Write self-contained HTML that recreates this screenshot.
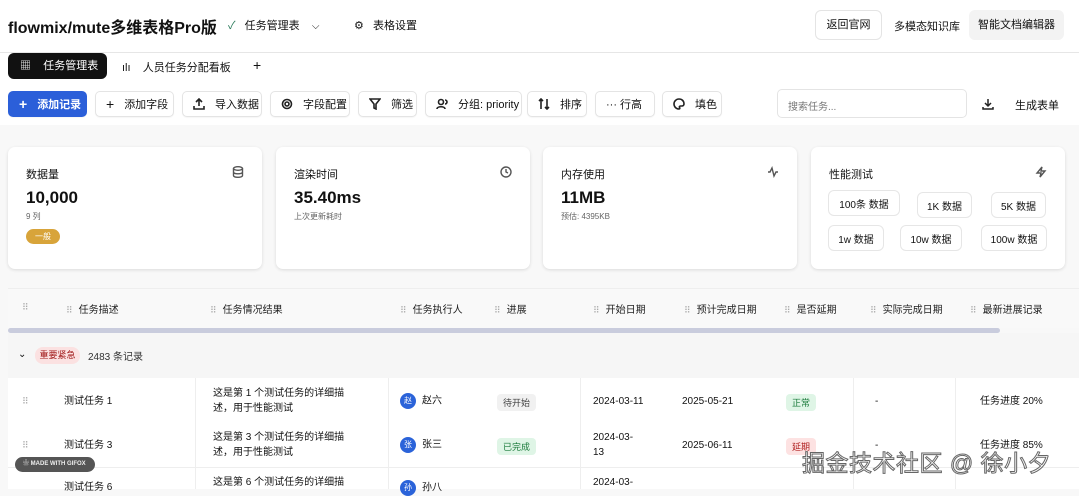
<!DOCTYPE html>
<html><head><meta charset="utf-8"><style>
*{box-sizing:border-box;margin:0;padding:0}
body{width:1079px;height:489px;overflow:hidden;background:#f8f8f8;font-family:"Liberation Sans","Noto Sans CJK SC",sans-serif;color:#111;position:relative;font-size:11px}
.a{position:absolute}
.top{left:0;top:0;width:1079px;height:125px;background:#fff}
.btn{position:absolute;top:91px;height:26px;border:1px solid #e4e4e4;border-radius:5px;background:#fff;display:flex;align-items:center;padding-left:10px;font-size:11px;gap:10px;box-shadow:0 1px 1px rgba(0,0,0,.04)}
.btn svg{width:12px;height:12px;stroke:#222;fill:none;stroke-width:1.6}
.card{position:absolute;top:147px;width:254px;height:122px;background:#fff;border-radius:7px;box-shadow:0 1px 3px rgba(0,0,0,.12)}
.card .t{position:absolute;left:18px;top:19px;font-size:11px}
.card .v{position:absolute;left:18px;top:41px;font-size:17px;font-weight:bold}
.card .s{position:absolute;left:18px;top:64px;font-size:8px;color:#666}
.card svg{position:absolute;right:18px;top:19px;width:12px;height:12px;stroke:#555;fill:none;stroke-width:1.4}
.pb{position:absolute;height:26px;border:1px solid #e6e6e6;border-radius:6px;font-size:10px;display:flex;align-items:center;justify-content:center;background:#fff}
.th{position:absolute;top:301px;font-size:10px;color:#222}
.th::before{content:"⠿";color:#aaa;font-size:9px;margin-right:6px}
.cell{position:absolute;font-size:10px;color:#111;line-height:15px}
.tag{position:absolute;font-size:9px;padding:2px 6px;border-radius:4px}
.av{display:inline-block;width:16px;height:16px;border-radius:50%;background:#2b63d9;color:#fff;font-size:8px;text-align:center;line-height:16px;margin-right:6px;vertical-align:middle}
.vl{position:absolute;width:1px;background:#eee}
.dr{position:absolute;left:22px;font-size:9px;color:#aaa}
</style></head><body>
<div class="a top"></div>
<div class="a" style="left:0;top:52px;width:1079px;height:1px;background:#e6e6e6"></div>
<div class="a" style="left:8px;top:14px;font-size:16px;font-weight:bold">flowmix/mute多维表格Pro版</div>
<div class="a" style="left:228px;top:17px;font-size:11px"><span style="color:#2a7a5a">✓</span>&nbsp;&nbsp;&nbsp;任务管理表&nbsp;&nbsp;&nbsp;&nbsp;<span style="font-size:10px">⌵</span></div>
<div class="a" style="left:354px;top:17px;font-size:11px">⚙&nbsp;&nbsp;&nbsp;表格设置</div>
<div class="a" style="left:815px;top:10px;width:67px;height:30px;border:1px solid #e4e4e4;border-radius:6px;font-size:11px;text-align:center;line-height:28px">返回官网</div>
<div class="a" style="left:894px;top:18px;font-size:11px">多模态知识库</div>
<div class="a" style="left:969px;top:10px;width:95px;height:30px;background:#f3f3f3;border-radius:6px;font-size:11px;text-align:center;line-height:30px">智能文档编辑器</div>
<div class="a" style="left:8px;top:53px;width:99px;height:26px;background:#111;border-radius:6px;color:#fff;font-size:11px;line-height:26px;padding-left:12px">▦&nbsp;&nbsp;&nbsp;&nbsp;任务管理表</div>
<div class="a" style="left:122px;top:59px;font-size:11px">ılı&nbsp;&nbsp;&nbsp;&nbsp;人员任务分配看板</div>
<div class="a" style="left:253px;top:57px;font-size:14px">+</div>
<div class="btn" style="left:8px;width:79px;background:#2b5fd9;border-color:#2b5fd9;color:#fff;font-weight:bold"><span style="font-size:14px">+</span>添加记录</div>
<div class="btn" style="left:95px;width:79px"><span style="font-size:14px">+</span>添加字段</div>
<div class="btn" style="left:182px;width:80px"><svg viewBox="0 0 12 12"><path d="M6 8V1M3 4l3-3 3 3M1 8v3h10V8"/></svg>导入数据</div>
<div class="btn" style="left:270px;width:80px"><svg viewBox="0 0 12 12"><circle cx="6" cy="6" r="2"/><circle cx="6" cy="6" r="4.5"/></svg>字段配置</div>
<div class="btn" style="left:358px;width:59px"><svg viewBox="0 0 12 12"><path d="M1 1h10L7 6v5L5 10V6z"/></svg>筛选</div>
<div class="btn" style="left:425px;width:97px"><svg viewBox="0 0 12 12"><circle cx="5" cy="4" r="2.5"/><path d="M1 11c0-3 8-3 8 0M9 2a2 2 0 010 4"/></svg>分组: priority</div>
<div class="btn" style="left:527px;width:60px"><svg viewBox="0 0 12 12"><path d="M3 11V1M1 3l2-2 2 2M9 1v10M7 9l2 2 2-2"/></svg>排序</div>
<div class="btn" style="left:595px;width:60px">···&nbsp;行高</div>
<div class="btn" style="left:662px;width:60px"><svg viewBox="0 0 12 12"><path d="M6 1a5 5 0 100 10c1 0 1-1 .5-1.5S6.5 8 7.5 8H9a2 2 0 002-2c0-3-2-5-5-5z"/></svg>填色</div>
<div class="a" style="left:777px;top:89px;width:190px;height:29px;border:1px solid #e4e4e4;border-radius:5px;font-size:10px;color:#777;padding:8px 10px">搜索任务...</div>
<svg class="a" style="left:982px;top:98px;width:12px;height:12px;stroke:#222;fill:none;stroke-width:1.5" viewBox="0 0 12 12"><path d="M6 1v7M3 5l3 3 3-3M1 9v2h10V9"/></svg>
<div class="a" style="left:1015px;top:97px;font-size:11px">生成表单</div>

<div class="card" style="left:8px"><div class="t">数据量</div><svg viewBox="0 0 12 12"><ellipse cx="6" cy="2.5" rx="4.5" ry="1.8"/><path d="M1.5 2.5v7c0 2.4 9 2.4 9 0v-7M1.5 6c0 2.4 9 2.4 9 0"/></svg><div class="v">10,000</div><div class="s">9 列</div><div class="a" style="left:18px;top:82px;width:34px;height:15px;border-radius:8px;background:#d8a43a;color:#fff;font-size:8px;text-align:center;line-height:15px">一般</div></div>
<div class="card" style="left:276px"><div class="t">渲染时间</div><svg viewBox="0 0 12 12"><circle cx="6" cy="6" r="5"/><path d="M6 3v3l2 1"/></svg><div class="v">35.40ms</div><div class="s">上次更新耗时</div></div>
<div class="card" style="left:543px"><div class="t">内存使用</div><svg viewBox="0 0 12 12"><path d="M1 6h2l2-4 2 8 2-4h2"/></svg><div class="v">11MB</div><div class="s">预估: 4395KB</div></div>
<div class="card" style="left:811px"><div class="t">性能测试</div><svg viewBox="0 0 12 12"><path d="M7 1L2 7h4l-1 4 5-6H6z"/></svg>
<div class="pb" style="left:17px;top:43px;width:72px">100条 数据</div>
<div class="pb" style="left:106px;top:45px;width:55px">1K 数据</div>
<div class="pb" style="left:180px;top:45px;width:55px">5K 数据</div>
<div class="pb" style="left:17px;top:78px;width:56px">1w 数据</div>
<div class="pb" style="left:89px;top:78px;width:62px">10w 数据</div>
<div class="pb" style="left:170px;top:78px;width:66px">100w 数据</div></div>

<div class="a" style="left:8px;top:288px;width:1071px;height:40px;background:#f9f9f9;border-top:1px solid #eee"></div>
<div class="a" style="left:8px;top:328px;width:992px;height:5px;background:#c9ccdd;border-radius:3px"></div>
<div class="a" style="left:8px;top:333px;width:1071px;height:45px;background:#f6f6f6"></div>
<div class="a" style="left:8px;top:378px;width:1071px;height:111px;background:#fff"></div>
<div class="vl" style="left:195px;top:378px;height:111px"></div>
<div class="vl" style="left:388px;top:378px;height:111px"></div>
<div class="vl" style="left:580px;top:378px;height:111px"></div>
<div class="vl" style="left:853px;top:378px;height:111px"></div>
<div class="vl" style="left:955px;top:378px;height:111px"></div>
<div class="a" style="left:8px;top:467px;width:1071px;height:1px;background:#eee"></div>
<div class="dr" style="top:302px">⠿</div>
<div class="th" style="left:66px">任务描述</div>
<div class="th" style="left:210px">任务情况结果</div>
<div class="th" style="left:400px">任务执行人</div>
<div class="th" style="left:494px">进展</div>
<div class="th" style="left:593px">开始日期</div>
<div class="th" style="left:684px">预计完成日期</div>
<div class="th" style="left:784px">是否延期</div>
<div class="th" style="left:870px">实际完成日期</div>
<div class="th" style="left:970px">最新进展记录</div>
<div class="a" style="left:18px;top:349px;font-size:10px">⌄</div>
<div class="a" style="left:35px;top:347px;width:45px;height:17px;border-radius:8px;background:#fbe1e1;color:#a01818;font-size:9px;text-align:center;line-height:17px">重要紧急</div>
<div class="a" style="left:88px;top:348px;font-size:10px;color:#333">2483 条记录</div>

<div class="dr" style="top:396px">⠿</div>
<div class="cell" style="left:64px;top:394px">测试任务 1</div>
<div class="cell" style="left:213px;top:386px">这是第 1 个测试任务的详细描<br>述，用于性能测试</div>
<div class="cell" style="left:400px;top:393px"><span class="av">赵</span>赵六</div>
<div class="tag" style="left:497px;top:394px;background:#f1f1f1;color:#444">待开始</div>
<div class="cell" style="left:593px;top:394px">2024-03-11</div>
<div class="cell" style="left:682px;top:394px">2025-05-21</div>
<div class="tag" style="left:786px;top:394px;background:#dff5e6;color:#1a7a3a">正常</div>
<div class="cell" style="left:875px;top:394px">-</div>
<div class="cell" style="left:980px;top:394px">任务进度 20%</div>

<div class="dr" style="top:440px">⠿</div>
<div class="cell" style="left:64px;top:438px">测试任务 3</div>
<div class="cell" style="left:213px;top:430px">这是第 3 个测试任务的详细描<br>述，用于性能测试</div>
<div class="cell" style="left:400px;top:437px"><span class="av">张</span>张三</div>
<div class="tag" style="left:497px;top:438px;background:#dff5e6;color:#1a7a3a">已完成</div>
<div class="cell" style="left:593px;top:430px">2024-03-<br>13</div>
<div class="cell" style="left:682px;top:438px">2025-06-11</div>
<div class="tag" style="left:786px;top:438px;background:#fde2e2;color:#b02020">延期</div>
<div class="cell" style="left:875px;top:438px">-</div>
<div class="cell" style="left:980px;top:438px">任务进度 85%</div>

<div class="cell" style="left:64px;top:480px">测试任务 6</div>
<div class="cell" style="left:213px;top:475px">这是第 6 个测试任务的详细描</div>
<div class="cell" style="left:400px;top:480px"><span class="av">孙</span>孙八</div>
<div class="cell" style="left:593px;top:475px">2024-03-</div>

<div class="a" style="left:15px;top:457px;width:80px;height:15px;border-radius:8px;background:#555;color:#eee;font-size:6px;line-height:15px;padding-left:8px;font-weight:bold">❀ MADE WITH GIFOX</div>
<div class="a" style="left:802px;top:444px;font-size:23px;color:#fff;-webkit-text-stroke:1px #666;letter-spacing:0.5px">掘金技术社区 @ 徐小夕</div>
</body></html>
